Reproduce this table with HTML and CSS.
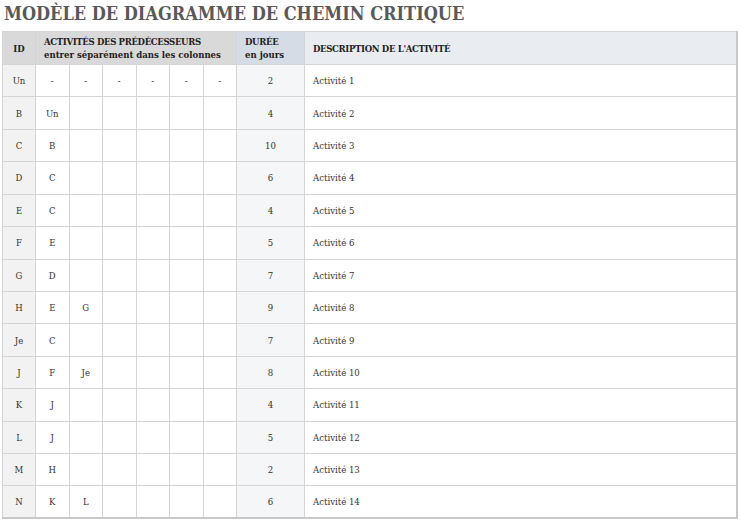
FILE: index.html
```html
<!DOCTYPE html>
<html lang="fr">
<head>
<meta charset="utf-8">
<link rel="stylesheet" href="styles.css">
</head>
<body>
<h1 class="title">MODÈLE DE DIAGRAMME DE CHEMIN CRITIQUE</h1>
<table class="cpm">
<colgroup>
<col class="c-id"><col class="c-p"><col class="c-p"><col class="c-p"><col class="c-p"><col class="c-p"><col class="c-p"><col class="c-dur"><col class="c-desc">
</colgroup>
<thead>
<tr>
<th class="h-id">ID</th>
<th class="h-pred" colspan="6"><span class="caps">ACTIVITÉS DES PRÉDÉCESSEURS</span><br>entrer séparément dans les colonnes</th>
<th class="h-dur"><span class="caps">DURÉE</span><br>en jours</th>
<th class="h-desc"><span class="caps">DESCRIPTION DE L'ACTIVITÉ</span></th>
</tr>
</thead>
<tbody>
<tr><td class="id">Un</td><td>-</td><td>-</td><td>-</td><td>-</td><td>-</td><td>-</td><td class="dur">2</td><td class="desc">Activité 1</td></tr>
<tr><td class="id">B</td><td>Un</td><td></td><td></td><td></td><td></td><td></td><td class="dur">4</td><td class="desc">Activité 2</td></tr>
<tr><td class="id">C</td><td>B</td><td></td><td></td><td></td><td></td><td></td><td class="dur">10</td><td class="desc">Activité 3</td></tr>
<tr><td class="id">D</td><td>C</td><td></td><td></td><td></td><td></td><td></td><td class="dur">6</td><td class="desc">Activité 4</td></tr>
<tr><td class="id">E</td><td>C</td><td></td><td></td><td></td><td></td><td></td><td class="dur">4</td><td class="desc">Activité 5</td></tr>
<tr><td class="id">F</td><td>E</td><td></td><td></td><td></td><td></td><td></td><td class="dur">5</td><td class="desc">Activité 6</td></tr>
<tr><td class="id">G</td><td>D</td><td></td><td></td><td></td><td></td><td></td><td class="dur">7</td><td class="desc">Activité 7</td></tr>
<tr><td class="id">H</td><td>E</td><td>G</td><td></td><td></td><td></td><td></td><td class="dur">9</td><td class="desc">Activité 8</td></tr>
<tr><td class="id">Je</td><td>C</td><td></td><td></td><td></td><td></td><td></td><td class="dur">7</td><td class="desc">Activité 9</td></tr>
<tr><td class="id">J</td><td>F</td><td>Je</td><td></td><td></td><td></td><td></td><td class="dur">8</td><td class="desc">Activité 10</td></tr>
<tr><td class="id">K</td><td>J</td><td></td><td></td><td></td><td></td><td></td><td class="dur">4</td><td class="desc">Activité 11</td></tr>
<tr><td class="id">L</td><td>J</td><td></td><td></td><td></td><td></td><td></td><td class="dur">5</td><td class="desc">Activité 12</td></tr>
<tr><td class="id">M</td><td>H</td><td></td><td></td><td></td><td></td><td></td><td class="dur">2</td><td class="desc">Activité 13</td></tr>
<tr><td class="id">N</td><td>K</td><td>L</td><td></td><td></td><td></td><td></td><td class="dur">6</td><td class="desc">Activité 14</td></tr>
</tbody>
</table>
</body>
</html>
```
FILE: styles.css
```css
html, body {
  margin: 0;
  padding: 0;
  background: #ffffff;
}
body {
  font-family: "DejaVu Serif Condensed", "DejaVu Serif", "Liberation Serif", serif;
  font-stretch: condensed;
  color: #333333;
  padding: 0 0 0 2px;
}
.title {
  margin: 0;
  padding: 2px 0 0 2px;
  height: 31px;
  box-sizing: border-box;
  font-size: 18px;
  font-weight: bold;
  color: #595959;
  line-height: 24px;
}
.cpm {
  border-collapse: collapse;
  table-layout: fixed;
  width: 736px;
  font-size: 9.5px;
  border-right: 2px solid #c8c8c8;
  border-bottom: 2px solid #c8c8c8;
  border-left: 1px solid #c8c8c8;
  border-top: 1px solid #c8c8c8;
}
.c-id { width: 33px; }
.c-p { width: 33.5px; }
.c-dur { width: 68px; }
.cpm th, .cpm td {
  border: 1px solid #d4d4d4;
  padding: 0;
}
.cpm th {
  height: 32px;
  font-weight: bold;
  text-align: left;
  color: #222;
  line-height: 13px;
  padding-left: 8px;
}
.cpm th .caps { letter-spacing: -0.35px; }
.cpm .h-id { background: #d9d9d9; text-align: center; padding-left: 0; }
.cpm .h-pred { background: #d9d9d9; }
.cpm .h-dur { background: #d6dce5; }
.cpm .h-desc { background: #e9ecf1; }
.cpm tbody tr { height: 32.43px; }
.cpm td {
  text-align: center;
  color: #333;
}
.cpm td.id { background: #f2f2f2; }
.cpm td.dur { background: #f5f6f8; }
.cpm td.desc { text-align: left; padding-left: 8px; }
```
